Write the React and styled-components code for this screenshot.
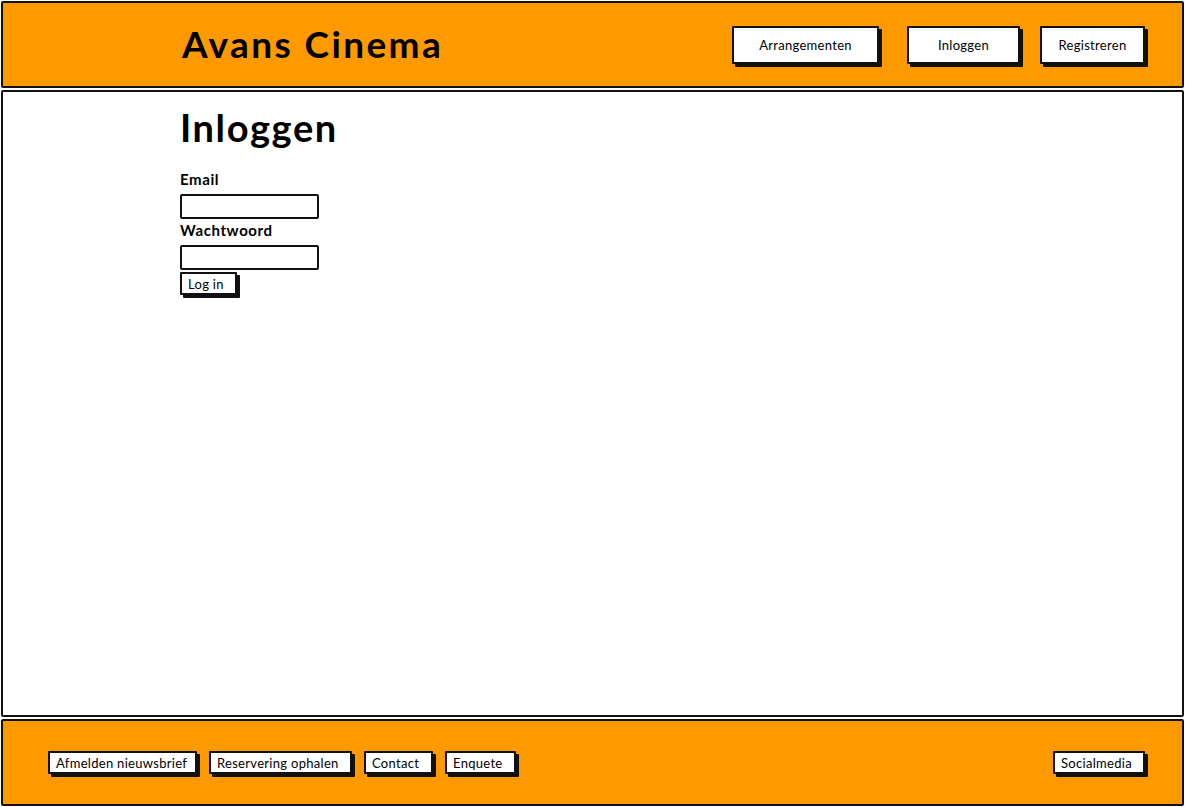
import React from "react";
import styled, { createGlobalStyle } from "styled-components";

const GlobalStyle = createGlobalStyle`
  * { box-sizing: border-box; }
  body {
    margin: 0;
    font-family: Lato, "Noto Sans", sans-serif;
    color: #000;
    background: #fff;
  }
`;

const Page = styled.div`
  height: 807px;
  padding: 1px;
  display: flex;
  flex-direction: column;
  gap: 2px;
`;

const Bar = styled.div`
  height: 87px;
  flex-shrink: 0;
  background: #ff9900;
  border: 2px solid #111;
  border-radius: 2px;
  display: flex;
  align-items: center;
`;

const Header = styled(Bar)`
  padding: 0 37px 0 179px;
`;

const Footer = styled(Bar)`
  padding: 0 37px 0 45px;
  gap: 12px;
`;

const Title = styled.div`
  font-size: 37px;
  font-weight: 700;
  letter-spacing: 2.4px;
  margin-top: -3px;
  flex: 1;
`;

const Nav = styled.nav`
  display: flex;
  align-items: center;
`;

const Button = styled.button`
  font-family: inherit;
  background: #fff;
  color: #000;
  border: 2px solid #111;
  border-radius: 1px;
  box-shadow: 3px 3px 0 #111;
  font-size: 13px;
  letter-spacing: 0.3px;
  height: ${(p) => (p.$small ? "23px" : "38px")};
  width: ${(p) => p.$w}px;
  margin-left: ${(p) => p.$ml || 0}px;
  text-align: ${(p) => (p.$small ? "left" : "center")};
  padding: ${(p) => (p.$small ? "0 0 0 6px" : "0")};
  white-space: nowrap;
  cursor: pointer;
`;

const Main = styled.main`
  flex: 1;
  background: #fff;
  border: 2px solid #111;
  border-radius: 2px;
  padding: 12px 0 0 177px;
`;

const Heading = styled.h1`
  margin: 0 0 20px;
  font-size: 38px;
  font-weight: 700;
  letter-spacing: 1.6px;
  line-height: 46px;
`;

const Form = styled.form`
  display: flex;
  flex-direction: column;
  align-items: flex-start;
`;

const Label = styled.label`
  font-size: 15px;
  font-weight: 700;
  letter-spacing: 0.6px;
  line-height: 18px;
  margin-bottom: 6px;
`;

const Input = styled.input`
  width: 139px;
  height: 25px;
  border: 2px solid #111;
  border-radius: 2px;
  margin-bottom: 2px;
  background: #fff;
`;

const Spacer = styled.div`
  flex: 1;
`;

export default function App() {
  return (
    <>
      <GlobalStyle />
      <Page>
        <Header>
          <Title>Avans Cinema</Title>
          <Nav>
            <Button $w={147}>Arrangementen</Button>
            <Button $w={113} $ml={28}>Inloggen</Button>
            <Button $w={105} $ml={20}>Registreren</Button>
          </Nav>
        </Header>
        <Main>
          <Heading>Inloggen</Heading>
          <Form onSubmit={(e) => e.preventDefault()}>
            <Label htmlFor="email">Email</Label>
            <Input id="email" type="email" />
            <Label htmlFor="pw">Wachtwoord</Label>
            <Input id="pw" type="password" />
            <Button $small $w={57}>Log in</Button>
          </Form>
        </Main>
        <Footer>
          <Button $small $w={149}>Afmelden nieuwsbrief</Button>
          <Button $small $w={143}>Reservering ophalen</Button>
          <Button $small $w={69}>Contact</Button>
          <Button $small $w={71}>Enquete</Button>
          <Spacer />
          <Button $small $w={92}>Socialmedia</Button>
        </Footer>
      </Page>
    </>
  );
}
